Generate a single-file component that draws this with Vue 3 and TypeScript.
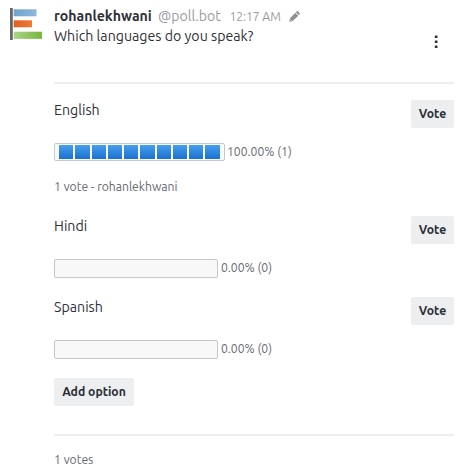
<script setup lang="ts">
interface PollOption {
  name: string
  percent: number
  votes: number
  voters: string[]
}

const segments = 10
const options: PollOption[] = [
  { name: 'English', percent: 100, votes: 1, voters: ['rohanlekhwani'] },
  { name: 'Hindi', percent: 0, votes: 0, voters: [] },
  { name: 'Spanish', percent: 0, votes: 0, voters: [] },
]
const total = options.reduce((sum, option) => sum + option.votes, 0)
const filled = (option: PollOption): number => Math.round((option.percent / 100) * segments)
</script>

<template>
  <article class="message">
    <svg class="avatar" width="32" height="34" viewBox="0 0 32 34">
      <defs>
        <linearGradient id="blue"><stop offset="0" stop-color="#6fa3cb" /><stop offset="1" stop-color="#8fb7dc" /></linearGradient>
        <linearGradient id="orange"><stop offset="0" stop-color="#df6020" /><stop offset="1" stop-color="#ee7c35" /></linearGradient>
        <linearGradient id="green"><stop offset="0" stop-color="#a9d58c" /><stop offset="1" stop-color="#78b63c" /></linearGradient>
      </defs>
      <rect x="0" y="0" width="2.8" height="32" fill="#676767" />
      <rect x="3.7" y="1.3" width="22.8" height="7" fill="url(#blue)" />
      <rect x="3.7" y="12.3" width="18.3" height="7" fill="url(#orange)" />
      <rect x="3.7" y="23.7" width="28.3" height="7.2" fill="url(#green)" />
    </svg>

    <div class="body">
      <header class="head">
        <div>
          <div class="meta">
            <span class="user">rohanlekhwani</span>
            <span class="handle">@poll.bot</span>
            <span class="time">12:17 AM</span>
            <svg class="pencil" width="11" height="11" viewBox="0 0 12 12" fill="#8f9195">
              <path d="M.4 11.6 1 7.8 6.9 1.9 10.1 5.1 4.2 11ZM7.5 1.3 8.5.4Q9.2-.2 9.9.4L11.6 2.1Q12.2 2.8 11.6 3.5L10.7 4.5Z" />
              <path d="m1.5 9.4 1.1 1.1" fill="none" stroke="#fff" stroke-width=".7" />
            </svg>
          </div>
          <div class="question">Which languages do you speak?</div>
        </div>
        <svg class="kebab" width="4" height="14" viewBox="0 0 4 14" fill="#2f3136">
          <rect x=".8" y=".5" width="2.7" height="2.5" rx=".5" />
          <rect x=".8" y="5.5" width="2.7" height="2.5" rx=".5" />
          <rect x=".8" y="10.5" width="2.7" height="2.5" rx=".5" />
        </svg>
      </header>

      <hr class="rule" />

      <section v-for="option in options" :key="option.name" class="option">
        <div class="title-row">
          <span class="name">{{ option.name }}</span>
          <button class="button vote">Vote</button>
        </div>
        <div class="result">
          <div class="bar" :class="{ full: filled(option) > 0 }">
            <i v-for="n in filled(option)" :key="n" class="segment"></i>
          </div>
          <span class="percent">{{ option.percent.toFixed(2) }}% ({{ option.votes }})</span>
        </div>
        <div v-if="option.votes" class="voters">{{ option.votes }} vote - {{ option.voters.join(', ') }}</div>
      </section>

      <button class="button add">Add option</button>
      <hr class="rule bottom" />
      <div class="total">{{ total }} votes</div>
    </div>
  </article>
</template>

<style>
body {
  background: #fff;
}
</style>

<style scoped>
.message {
  display: flex;
  box-sizing: border-box;
  width: 469px;
  height: 474px;
  padding: 6px 15px 0 10px;
  overflow: hidden;
  font-family: Ubuntu, "Noto Sans", sans-serif;
  font-size: 14.2px;
  color: #2f3039;
  white-space: nowrap;
}
.avatar {
  flex: none;
  margin: 2px 12px 0 0;
}
.body {
  flex: 1;
}
.head {
  display: flex;
  justify-content: space-between;
  height: 76px;
}
.meta {
  display: flex;
  align-items: center;
  height: 20px;
}
.user {
  width: 104px;
  font-weight: 700;
  font-size: 14.15px;
}
.handle {
  width: 71.5px;
  font-size: 14.1px;
  color: #9b9c9f;
}
.time {
  width: 59px;
  font-size: 12.2px;
  letter-spacing: -0.08px;
  color: #9b9c9f;
}
.question {
  height: 20px;
  line-height: 20px;
}
.kebab {
  margin: 29px 16px 0 0;
}
.rule {
  height: 2px;
  margin: 0 0 16px;
  border: 0;
  background: #eeeeef;
}
.option {
  padding-bottom: 19px;
}
.title-row {
  display: flex;
  justify-content: space-between;
  height: 28px;
  margin-bottom: 15px;
}
.name {
  height: 20px;
  line-height: 20px;
}
.button {
  display: flex;
  align-items: center;
  justify-content: center;
  height: 28px;
  padding: 0 0 2px;
  border: 0;
  border-radius: 2px;
  background: #edeef0;
  color: #2b2d35;
  font-family: inherit;
  font-size: 12.2px;
  font-weight: 700;
}
.vote {
  width: 43px;
}
.add {
  width: 80px;
}
.result {
  display: flex;
  align-items: flex-start;
  gap: 3px;
  height: 19px;
}
.bar {
  display: flex;
  box-sizing: border-box;
  width: 164px;
  height: 19px;
  border: 1px solid #c6c7c9;
  border-radius: 2px;
  background: #f8f8f8;
}
.bar.full {
  width: 171px;
  height: 18px;
  padding: 1px 4.5px 0 4px;
  gap: 2px;
  background: #f8fbfd;
}
.segment {
  flex: 1;
  height: 14px;
  background: linear-gradient(#46a0ee, #1c70cf);
}
.percent,
.voters,
.total {
  font-size: 12.15px;
  line-height: 18px;
  color: #666a71;
}
.bar.full + .percent {
  margin-left: -1px;
}
.voters {
  height: 20px;
  margin-top: 15px;
  line-height: 20px;
}
.rule.bottom {
  margin: 28px 0 14px;
}
.total {
  line-height: 20px;
}
</style>
